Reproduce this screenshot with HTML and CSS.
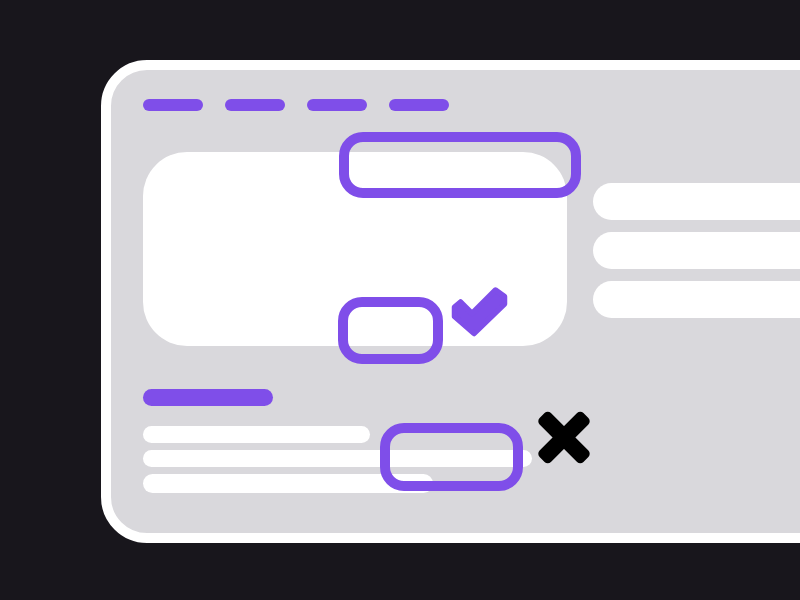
FILE: index.html
```html
<!DOCTYPE html>
<html lang="en">
<head>
<meta charset="utf-8">
<title>Form review illustration</title>
<link rel="stylesheet" href="styles.css">
</head>
<body>
<div class="stage">
  <div class="card">
    <div class="dashes">
      <span class="dash"></span><span class="dash"></span><span class="dash"></span><span class="dash"></span>
    </div>
    <div class="main-row">
      <div class="panel"></div>
      <div class="bars">
        <span class="bar"></span>
        <span class="bar"></span>
        <span class="bar"></span>
      </div>
    </div>
    <div class="lower">
      <span class="heading"></span>
      <div class="lines">
        <span class="line line-1"></span>
        <span class="line line-2"></span>
        <span class="line line-3"></span>
      </div>
    </div>

    <span class="outline outline-1"></span>
    <span class="outline outline-2"></span>
    <span class="outline outline-3"></span>

    <svg class="icon check" width="80" height="70" viewBox="0 0 80 70" aria-hidden="true">
      <path d="M14.5 29 L20.5 24 L32 35.5 L55.5 12 L64.5 18.5 L64.5 26 L34 55.5 L14.5 38.5 Z" fill="#7f4ee9" stroke="#7f4ee9" stroke-width="5.5" stroke-linejoin="round"/>
    </svg>
    <svg class="icon cross" width="70" height="70" viewBox="0 0 70 70" aria-hidden="true">
      <g fill="#000">
        <rect x="4" y="28.5" width="62" height="16" rx="4.5" transform="rotate(45 35 36.5)"/>
        <rect x="4" y="28.5" width="62" height="16" rx="4.5" transform="rotate(-45 35 36.5)"/>
      </g>
    </svg>
  </div>
</div>
</body>
</html>
```

FILE: styles.css
```css
html, body {
  margin: 0;
  padding: 0;
  width: 800px;
  height: 600px;
  overflow: hidden;
  background: #18161c;
  font-family: "Liberation Sans", Arial, sans-serif;
}

.stage {
  width: 800px;
  height: 600px;
  overflow: hidden;
  padding: 60px 0 0 101px;
  box-sizing: border-box;
}

.card {
  position: relative;
  box-sizing: border-box;
  width: 780px;
  height: 483px;
  border: 10px solid #ffffff;
  border-radius: 46px;
  background: #d9d8dc;
  padding: 29px 0 0 32px;
}

.dashes {
  display: flex;
  gap: 22px;
}

.dash {
  display: block;
  width: 60px;
  height: 12px;
  border-radius: 6px;
  background: #7f4ee9;
}

.main-row {
  display: flex;
  gap: 26px;
  margin-top: 41px;
}

.panel {
  width: 424px;
  height: 194px;
  border-radius: 44px;
  background: #ffffff;
  flex: none;
}

.bars {
  display: flex;
  flex-direction: column;
  gap: 12px;
  padding-top: 31px;
  flex: 1;
}

.bar {
  display: block;
  height: 37px;
  border-radius: 18.5px;
  background: #ffffff;
}

.lower {
  margin-top: 43px;
}

.heading {
  display: block;
  width: 130px;
  height: 17px;
  border-radius: 8.5px;
  background: #7f4ee9;
}

.lines {
  display: flex;
  flex-direction: column;
  gap: 7px;
  margin-top: 20px;
}

.line {
  display: block;
  height: 17px;
  border-radius: 8.5px;
  background: #ffffff;
}

.line-1 { width: 227px; }
.line-2 { width: 389px; }
.line-3 { width: 290px; height: 19px; border-radius: 9.5px; }

.outline {
  position: absolute;
  box-sizing: border-box;
  border: 10px solid #7f4ee9;
  border-radius: 24px;
  background: transparent;
}

.outline-1 { left: 228px; top: 62px; width: 242px; height: 66px; }
.outline-2 { left: 227px; top: 227px; width: 105px; height: 67px; }
.outline-3 { left: 269px; top: 353px; width: 143px; height: 68px; }

.icon {
  position: absolute;
  display: block;
}

.check { left: 329px; top: 208px; }
.cross { left: 418px; top: 331px; }
```
